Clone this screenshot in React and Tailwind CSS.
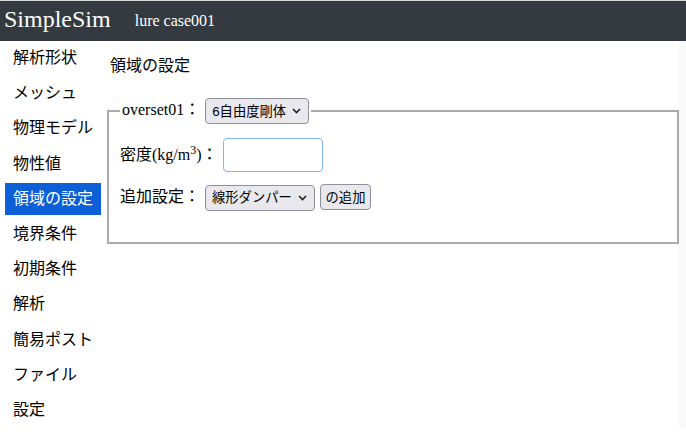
import React, { useState } from "react";

const menu = [
  "解析形状",
  "メッシュ",
  "物理モデル",
  "物性値",
  "領域の設定",
  "境界条件",
  "初期条件",
  "解析",
  "簡易ポスト",
  "ファイル",
  "設定",
];

const serif = "font-['Liberation_Serif','Noto_Sans_CJK_JP',serif]";
const ctrl = "font-['Liberation_Sans','Noto_Sans_CJK_JP',sans-serif]";

function Chevron() {
  return (
    <svg
      className="pointer-events-none absolute right-[8px] top-1/2 -translate-y-1/2"
      width="9"
      height="6"
      viewBox="0 0 9 6"
    >
      <path d="M1 1l3.5 3.5L8 1" fill="none" stroke="#222" strokeWidth="1.6" />
    </svg>
  );
}

function Select({ value, options, width }) {
  return (
    <span className="relative inline-block align-middle">
      <select
        defaultValue={value}
        className={`${ctrl} ${width} h-[26px] appearance-none rounded-[4px] border border-[#8f8f9d] bg-[#e9e9ed] pl-[6px] text-[13.3px] text-black`}
      >
        {options.map((o) => (
          <option key={o}>{o}</option>
        ))}
      </select>
      <Chevron />
    </span>
  );
}

export default function App() {
  const [active, setActive] = useState(4);

  return (
    <div className={`${serif} min-h-[435px] bg-white text-black`}>
      {/* Header */}
      <div className="flex h-[41px] items-start border-t border-[#d9d9d9] bg-[#343a40] pl-[4px] text-white">
        <span className="text-[24px] leading-[36px]">SimpleSim</span>
        <span className="ml-[24px] pt-[8px] text-[16px] leading-[24px]">lure case001</span>
      </div>

      <div className="flex">
        {/* Sidebar */}
        <div className="w-[107px] shrink-0 pl-[5px] pr-[6px] pt-[1px]">
          {menu.map((m, i) => (
            <div
              key={m}
              onClick={() => setActive(i)}
              className={`mb-[3.2px] flex h-[32px] cursor-pointer items-center pl-[8px] text-[16px] ${
                active === i ? "bg-[#0d5fd8] text-white" : "text-black"
              }`}
            >
              {m}
            </div>
          ))}
        </div>

        {/* Main */}
        <div className="flex-1 pt-[13px]">
          <div className="pl-[3px] text-[16px] leading-[24px]">領域の設定</div>

          <fieldset className="mt-[19px] border-2 border-[#ababab] px-[11px] pb-[31px]">
            <legend className="px-[2px] text-[16px] leading-[26px]">
              overset01：
              <span className="ml-[5px]">
                <Select value="6自由度剛体" options={["6自由度剛体", "固定"]} width="w-[104px]" />
              </span>
            </legend>

            <div className="mt-[14px] flex items-center text-[16px]">
              <span>
                密度(kg/m<sup className="text-[12px]">3</sup>)：
              </span>
              <input
                type="text"
                className="ml-[5px] h-[34px] w-[100px] rounded-[4px] border border-[#86b3f2] bg-white px-2"
              />
            </div>

            <div className="mt-[12px] flex items-center text-[16px]">
              <span>追加設定：</span>
              <span className="ml-[5px]">
                <Select value="線形ダンパー" options={["線形ダンパー", "線形バネ"]} width="w-[110px]" />
              </span>
              <button
                className={`${ctrl} ml-[5px] h-[26px] w-[51px] rounded-[4px] border border-[#8f8f9d] bg-[#e9e9ed] text-[13.3px]`}
              >
                の追加
              </button>
            </div>
          </fieldset>
        </div>

        {/* right gutter */}
        <div className="w-[7px] shrink-0 bg-[#f9f9f9]" />
      </div>
    </div>
  );
}
